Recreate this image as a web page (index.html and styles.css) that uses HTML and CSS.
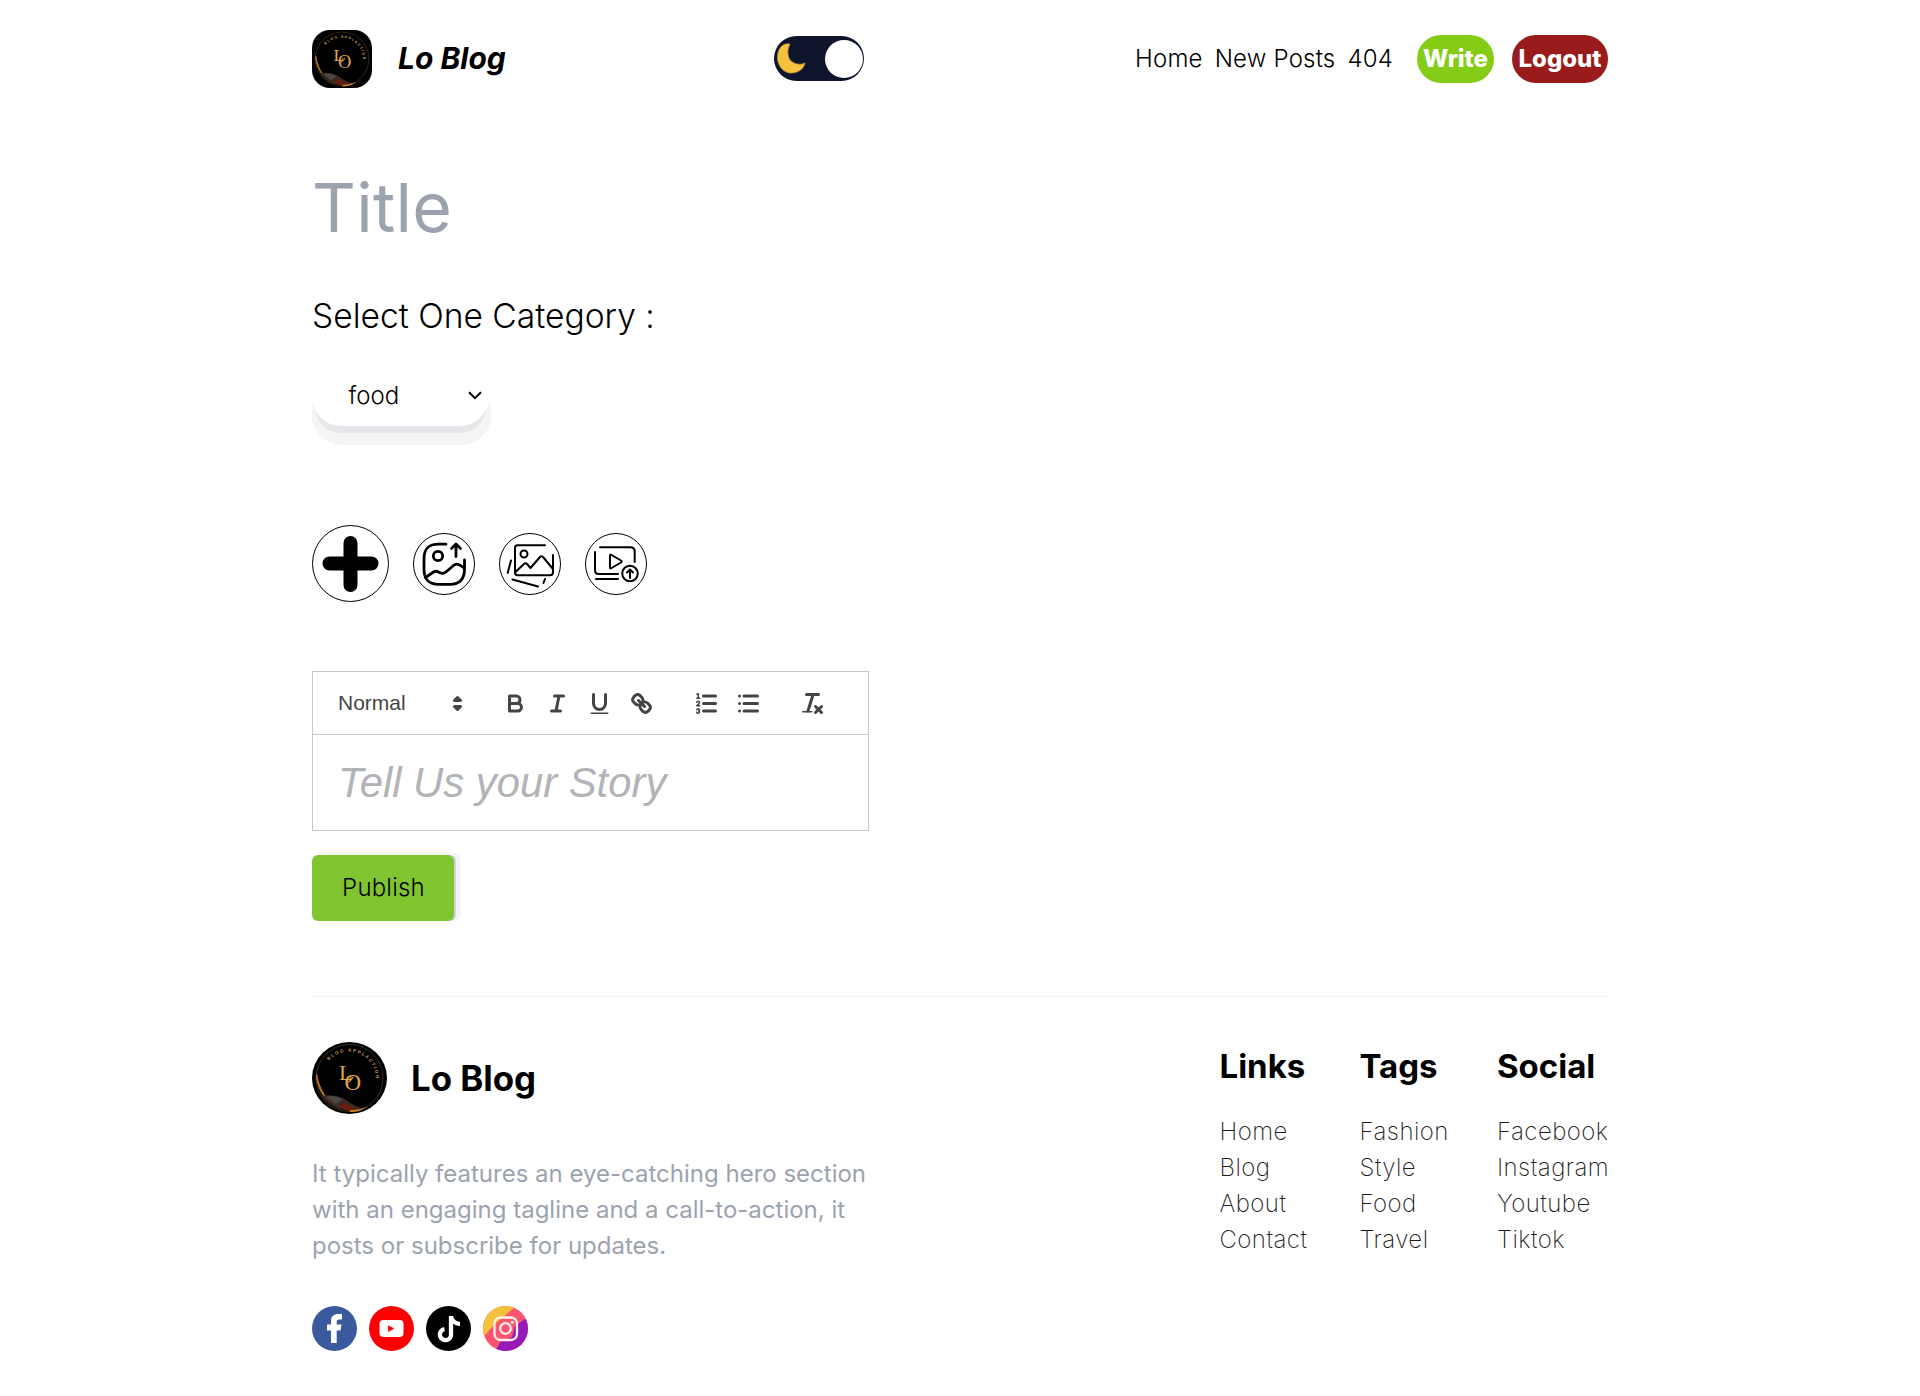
FILE: index.html
```html
<!DOCTYPE html>
<html lang="en">
<head>
<meta charset="utf-8">
<title>Lo Blog</title>
<link rel="stylesheet" href="styles.css">
</head>
<body>
<svg class="defs" width="0" height="0" aria-hidden="true">
  <symbol id="emblem" viewBox="0 0 75 72">
    <rect width="75" height="72" fill="#000"/>
    <circle cx="37.500" cy="36" r="33.500" fill="none" stroke="#38301f" stroke-width="1"/>
    <path d="M4.500 32C5 48 14 60 27 66 17 61 8 52 4.500 32Z" fill="#b86f20" stroke="#b86f20" stroke-width="1.200"/>
    <path d="M10 54C17 52 25 54 31 56 36 59 42 65 52 66 40 72 20 68 10 54Z" fill="#3b2a22"/>
    <path d="M14 55C20 53 27 54 30 58L24 62Z" fill="#4c4846"/>
    <path d="M27 64L33 61 42 67 36 69Z" fill="#6b1c0a"/>
    <path d="M38 68C45 68 50 67 56 64 50 69 45 70 38 70Z" fill="#d07d24"/>
    <path id="ring" d="M16.800 18.600A27 27 0 0 1 60 50.600" fill="none"/>
    <text class="ring-text"><textPath href="#ring">BLOG APPLACTION</textPath></text>
    <text class="mono-l" x="27" y="38">L</text>
    <text class="mono-o" x="32.500" y="47.500">O</text>
    <path d="M36 40C39 39 40 37 41 35" stroke="#e3a54d" stroke-width="1.200" fill="none"/>
  </symbol>
</svg>
<div class="page">
  <header class="header">
    <a class="brand">
      <svg class="brand-logo" preserveAspectRatio="none" viewBox="0 0 75 72"><use href="#emblem"/></svg>
      <span class="brand-name">Lo Blog</span>
    </a>
    <div class="toggle">
      <svg class="moon" viewBox="0 0 30 31"><path d="M14 1C3-1 0 12 2 19 5 29 14 32 21 29 26 27 28 24 29 20 23 23 15 20 13 15 11 10 12 5 14 1Z" fill="#f5c23e" stroke="#b78a3c" stroke-width=".8"/></svg>
      <span class="knob"></span>
    </div>
    <nav class="nav">
      <a>Home</a><a>New Posts</a><a>404</a>
      <button class="pill write">Write</button>
      <button class="pill logout">Logout</button>
    </nav>
  </header>

  <main class="compose">
    <div class="title-field">Title</div>
    <div class="label">Select One Category :</div>
    <div class="select"><span>food</span>
      <svg width="14" height="9" viewBox="0 0 14 9"><path d="M1 1.200L7 7.200 13 1.200" fill="none" stroke="#000" stroke-width="2"/></svg>
    </div>
    <div class="media">
      <button class="round big"><svg viewBox="0 0 77 77"><path d="M38.500 18V60M17.500 38.500H59.500" stroke="#000" stroke-width="14" stroke-linecap="round"/></svg></button>
      <button class="round"><svg viewBox="0 0 62 62" fill="none" stroke="#000" stroke-width="2.800" stroke-linecap="round" stroke-linejoin="round"><path d="M33 11.200H26C15 11.200 11 16 11 26V36C11 46 15 51.300 26 51.300H37C47 51.300 51.500 46 51.500 36V27"/><circle cx="25" cy="23" r="4.700"/><path d="M43 23.500V12M38.500 15.500L43 11 47.500 15.500M12.500 44.500L20.500 39C23 37.500 24.500 38 26.500 39.500 29 41 31 41 33.500 38.500L40.500 32.500C43.500 30 46 31 51 35"/></svg></button>
      <button class="round"><svg viewBox="0 0 62 62" fill="none" stroke="#000" stroke-width="2" stroke-linecap="round" stroke-linejoin="round"><path d="M46 12.300H18.500C17 12.300 16 13 16 15V39.500C16 41.500 17 42.300 18.500 42.300H51C53.500 42.300 54 41 54 39V22"/><circle cx="25" cy="21" r="3.500"/><path d="M16.500 39L25 31Q26.500 29.500 28 31L31.500 35 41 24Q42.500 22.500 44 24L54 36M12 27.500L8.700 40M13.500 46.500L39 53.500M46 46L44.500 50"/></svg></button>
      <button class="round"><svg viewBox="0 0 62 62" fill="none" stroke="#000" stroke-width="2" stroke-linecap="round" stroke-linejoin="round"><path d="M15 14.200H45C48.500 14.200 49.700 15.500 49.700 18V29M10 19V36C10 39.500 10.500 41 14 41H33M11 46H33"/><path d="M25 22.500V34.500Q25 36 26.500 35L36 29.500Q37.300 28.500 36 27.500L26.500 22Q25 21 25 22.500Z"/><circle cx="45" cy="40.500" r="7.800"/><path d="M45 45V37M42 39.500L45 36.500 48 39.500"/></svg></button>
    </div>

    <section class="editor">
      <div class="toolbar">
        <div class="picker"><span>Normal</span>
          <svg class="tool-icon" viewBox="0 0 18 18"><polygon class="fs" points="7 11 9 13 11 11 7 11"/><polygon class="fs" points="7 7 9 5 11 7 7 7"/></svg></div>
        <div class="group">
          <button><svg class="tool-icon" viewBox="0 0 18 18"><path class="s" d="M5,4H9.500A2.500,2.500,0,0,1,12,6.500v0A2.500,2.500,0,0,1,9.500,9H5A0,0,0,0,1,5,9V4A0,0,0,0,1,5,4Z"/><path class="s" d="M5,9h5.500A2.500,2.500,0,0,1,13,11.500v0A2.500,2.500,0,0,1,10.500,14H5a0,0,0,0,1,0,0V9A0,0,0,0,1,5,9Z"/></svg></button>
          <button><svg class="tool-icon" viewBox="0 0 18 18"><path class="s" d="M7 4H13M5 14H11M8 14L10 4"/></svg></button>
          <button><svg class="tool-icon" viewBox="0 0 18 18"><path class="s" d="M5,3V9a4.012,4.012,0,0,0,4,4H9a4.012,4.012,0,0,0,4-4V3"/><rect class="f" height="1" rx=".5" ry=".5" width="12" x="3" y="15"/></svg></button>
          <button><svg class="tool-icon" viewBox="0 0 18 18"><path class="s" d="M7 7L11 11"/><path class="s" d="M8.900,4.577a3.476,3.476,0,0,1,.36,4.679A3.476,3.476,0,0,1,4.577,8.900C3.185,7.500,2.035,6.400,4.217,4.217S7.500,3.185,8.900,4.577Z"/><path class="s" d="M13.423,9.100a3.476,3.476,0,0,0-4.679-.36,3.476,3.476,0,0,0,.36,4.679c1.392,1.392,2.500,2.542,4.679.36S14.815,10.500,13.423,9.100Z"/></svg></button>
        </div>
        <div class="group">
          <button><svg class="tool-icon" viewBox="0 0 18 18"><path class="s" d="M7 4H15M7 9H15M7 14H15"/><path class="s thin" d="M2.500 5.500H4.500"/><path class="f" d="M3.500,6A0.500,0.500,0,0,1,3,5.500V3.085l-0.276.138A0.500,0.500,0,0,1,2.053,3c-0.124-.247-0.023-0.324.224-0.447l1-.5A0.500,0.500,0,0,1,4,2.500v3A0.500,0.500,0,0,1,3.500,6Z"/><path class="s thin" d="M4.500,10.500h-2c0-.234,1.850-1.076,1.850-2.234A0.959,0.959,0,0,0,2.500,8.156"/><path class="s thin" d="M2.500,14.846a0.959,0.959,0,0,0,1.850-.109A0.700,0.700,0,0,0,3.750,14a0.688,0.688,0,0,0,.6-0.736,0.959,0.959,0,0,0-1.850-.109"/></svg></button>
          <button><svg class="tool-icon" viewBox="0 0 18 18"><path class="s" d="M6 4H15M6 9H15M6 14H15M3 4H3M3 9H3M3 14H3"/></svg></button>
        </div>
        <div class="group">
          <button><svg class="tool-icon" viewBox="0 0 18 18"><path class="s" d="M5 3H13M6 14L9.350 3M11 11L15 15M15 11L11 15"/><rect class="f" height="1" rx=".5" ry=".5" width="7" x="2" y="14"/></svg></button>
        </div>
      </div>
      <div class="story">Tell Us your Story</div>
    </section>
    <button class="publish">Publish</button>
  </main>

  <footer class="footer">
    <div class="about">
      <div class="footer-brand">
        <svg class="footer-logo" viewBox="0 0 75 72"><use href="#emblem"/></svg>
        <span>Lo Blog</span>
      </div>
      <p>It typically features an eye-catching hero section<br>with an engaging tagline and a call-to-action, it<br>posts or subscribe for updates.</p>
      <div class="social">
        <svg viewBox="0 0 45 45"><circle cx="22.500" cy="22.500" r="22.500" fill="#3b5a9d"/><path d="M19 37V24.500H15V18.500H19V15C19 10 22 8 26 8H30V13.500H27C25 13.500 24.700 14.500 24.700 16V18.500H29.500L28.500 24.500H24.700V37Z" fill="#fff"/></svg>
        <svg viewBox="0 0 45 45"><circle cx="22.500" cy="22.500" r="22.500" fill="#f00"/><rect x="10.500" y="14" width="24" height="17" rx="4" fill="#fff"/><path d="M19.200 19.300V26L25.200 22.600Z" fill="#f00"/></svg>
        <svg viewBox="0 0 45 45"><circle cx="22.500" cy="22.500" r="22.500"/><path d="M25 10V27.500A5.600 5.600 0 1 1 18.500 23" fill="none" stroke="#fff" stroke-width="4.300"/><path d="M27 10C27.500 13.500 30 15.500 34 15.800V20C31 20 28.500 19 27 17.500Z" fill="#fff"/></svg>
        <svg viewBox="0 0 45 45"><clipPath id="disc"><circle cx="22.500" cy="22.500" r="22.500"/></clipPath><g clip-path="url(#disc)"><path fill="#ff5470" d="M0 0H45V45H0Z"/><path fill="#f3c13b" d="M0 0H33L12 18 0 31Z"/><path fill="#961ab5" d="M45 11L32 20 29 31 18 35 12 45H45Z"/></g><rect x="11.500" y="11.500" width="22.500" height="22.500" rx="6" fill="none" stroke="#fff0ea" stroke-width="2.300"/><circle cx="22.500" cy="22.500" r="5.300" fill="none" stroke="#fff0ea" stroke-width="2.300"/><circle cx="29.200" cy="16.300" r="1.500" fill="#fff0ea"/></svg>
      </div>
    </div>
    <div class="links">
      <div><h2>Links</h2><ul><li>Home</li><li>Blog</li><li>About</li><li>Contact</li></ul></div>
      <div><h2>Tags</h2><ul><li>Fashion</li><li>Style</li><li>Food</li><li>Travel</li></ul></div>
      <div><h2>Social</h2><ul><li>Facebook</li><li>Instagram</li><li>Youtube</li><li>Tiktok</li></ul></div>
    </div>
  </footer>
</div>
</body>
</html>
```
FILE: styles.css
```css
* { box-sizing: border-box; margin: 0; padding: 0; }
body { background: #fff; color: #000; font: 300 24px/36px Inter, "Liberation Sans", sans-serif; }
button { border: 0; background: none; font: inherit; color: inherit; }
ul { list-style: none; }
.defs { display: block; }
.page { width: 1296px; margin: 0 auto; }

.ring-text { font: 700 4.500px/1 "Liberation Sans", sans-serif; letter-spacing: 1.500px; fill: #c99a5c; }
.mono-l { font: 400 22px/1 "Liberation Serif", serif; fill: #e3a54d; }
.mono-o { font: 400 23px/1 "Liberation Serif", serif; fill: #e3a54d; }

.header { display: grid; grid-template-columns: 462px 90px 1fr; align-items: center; height: 117px; }
.brand { display: flex; align-items: center; gap: 26px; }
.brand-logo { width: 60px; height: 58px; border-radius: 18px; }
.brand-name { padding-bottom: 2px; font-size: 30px; font-weight: 700; font-style: italic; }
.toggle { display: flex; align-items: center; justify-content: space-between; width: 90px; height: 45px; padding: 0 1px 0 2px; border-radius: 23px; background: #0d142b; }
.moon { width: 30px; height: 31px; }
.knob { width: 38px; height: 38px; border-radius: 50%; background: #fff; }
.nav { display: flex; align-items: center; justify-content: flex-end; letter-spacing: .2px; }
.nav a { margin-right: 12px; }
.pill { height: 48px; border-radius: 24px; color: #fff; font-weight: 800; letter-spacing: 0; }
.write { width: 77px; margin: 0 18px 0 12px; background: #84cc16; }
.logout { width: 96px; background: #991b1b; }

.title-field { margin-top: 45px; font-size: 68px; line-height: 90px; font-weight: 400; letter-spacing: .3px; color: #9ca3af; }
.label { margin-top: 39px; font-size: 33.600px; line-height: 50px; }
.select { display: flex; align-items: center; justify-content: space-between; width: 177px; height: 61px; margin-top: 24px; padding: 0 7px 0 36.500px; border-radius: 29px; background: #fff; box-shadow: 0 10px 0 -3px #e5e7eb, 1px 17.500px 0 1.500px #f5f5f4; }
.media { display: flex; align-items: center; gap: 24px; margin-top: 99px; }
.round { width: 62px; height: 62px; border: 1.500px solid #000; border-radius: 50%; display: grid; place-items: center; }
.round svg { width: 62px; height: 62px; margin: -1px; }
.round.big { width: 77px; height: 77px; }
.round.big svg { width: 77px; height: 77px; }

.editor { width: 557px; height: 160px; margin-top: 69px; border: 1px solid #c4c8d0; font-family: "Liberation Sans", Arial, sans-serif; }
.toolbar { display: flex; align-items: center; gap: 22.500px; height: 63px; padding: 0 12px; border-bottom: 1px solid #c4c8d0; color: #444; }
.picker { display: flex; align-items: center; justify-content: space-between; width: 147px; height: 36px; padding: 0 1px 0 13px; font-size: 21px; font-weight: 500; }
.group { display: flex; }
.group button { width: 42px; height: 36px; display: grid; place-items: center; }
.tool-icon { width: 27px; height: 27px; }
.s { fill: none; stroke: #444; stroke-width: 2; stroke-linecap: round; stroke-linejoin: round; }
.thin { stroke-width: 1; }
.f { fill: #444; }
.fs { fill: #444; stroke: #444; stroke-width: 2; stroke-linejoin: round; }
.story { padding: 18px 25px; font-size: 41.800px; line-height: 60px; font-style: italic; font-weight: 400; color: #b2b3b7; }
.publish { display: block; width: 142px; height: 66px; margin-top: 24px; padding-left: 1px; border-radius: 6px; background: #80c52f; letter-spacing: .2px; box-shadow: 2px 0 0 #cbd5e1, 5px -1px 0 1.500px #f3f4f6; clip-path: inset(-4px -10px 0 0); }

.footer { display: flex; justify-content: space-between; margin-top: 75px; border-top: 1px solid #f3f4f6; }
.about { padding-top: 45px; }
.footer-brand { display: flex; align-items: center; gap: 24px; font-size: 34.800px; font-weight: 700; }
.footer-logo { width: 75px; height: 72px; border-radius: 50%; }
.about p { margin-top: 42px; font-weight: 400; color: #9ca3af; }
.social { display: flex; gap: 12px; margin-top: 42px; }
.social svg { width: 45px; height: 45px; }
.links { display: grid; grid-template-columns: 140px 137.500px 111px; padding-top: 51px; }
.links h2 { font-size: 33px; font-weight: 700; line-height: 36px; margin-bottom: 30px; }
.links ul { font-weight: 200; letter-spacing: .45px; color: #1c1c1f; }
```
